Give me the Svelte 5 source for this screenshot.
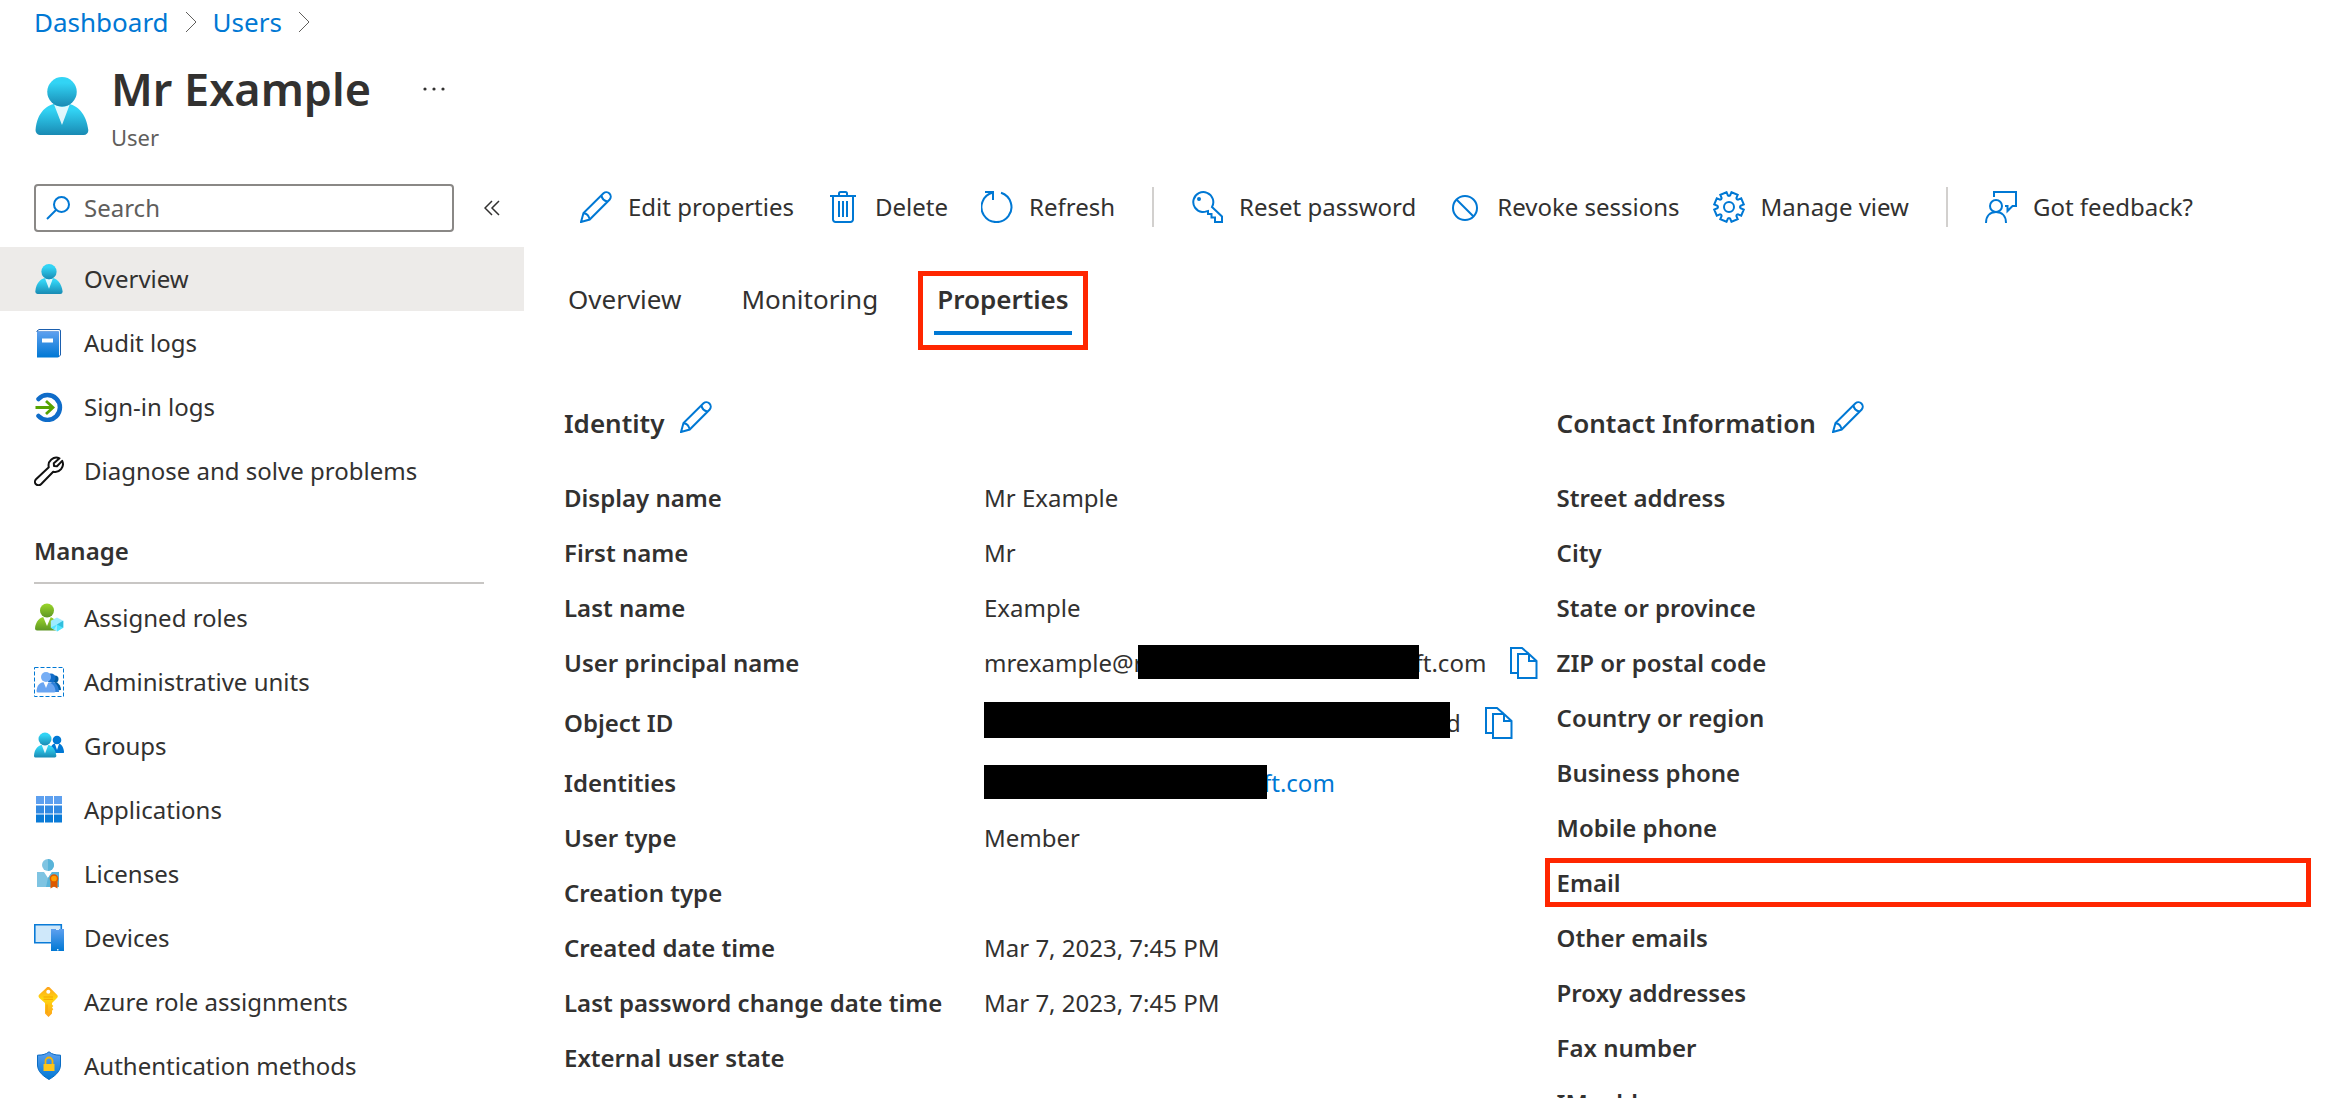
<script lang="ts">
    interface NavItem {
        label: string;
        icon: string;
    }

    interface Command {
        label: string;
        icon: string;
        divider?: boolean;
    }

    const generalItems: NavItem[] = [
        { label: "Overview", icon: "user" },
        { label: "Audit logs", icon: "book" },
        { label: "Sign-in logs", icon: "signin" },
        { label: "Diagnose and solve problems", icon: "wrench" },
    ];

    const manageItems: NavItem[] = [
        { label: "Assigned roles", icon: "roles" },
        { label: "Administrative units", icon: "units" },
        { label: "Groups", icon: "groups" },
        { label: "Applications", icon: "apps" },
        { label: "Licenses", icon: "license" },
        { label: "Devices", icon: "devices" },
        { label: "Azure role assignments", icon: "goldkey" },
        { label: "Authentication methods", icon: "shield" },
    ];

    const commands: Command[] = [
        { label: "Edit properties", icon: "pencil" },
        { label: "Delete", icon: "trash" },
        { label: "Refresh", icon: "refresh" },
        { label: "Reset password", icon: "key", divider: true },
        { label: "Revoke sessions", icon: "block" },
        { label: "Manage view", icon: "gear" },
        { label: "Got feedback?", icon: "feedback", divider: true },
    ];

    const tabs = ["Overview", "Monitoring", "Properties"];

    const identity = [
        { label: "Display name", value: "Mr Example" },
        { label: "First name", value: "Mr" },
        { label: "Last name", value: "Example" },
        { label: "User principal name", kind: "upn" },
        { label: "Object ID", kind: "object" },
        { label: "Identities", kind: "identities" },
        { label: "User type", value: "Member" },
        { label: "Creation type", value: "" },
        { label: "Created date time", value: "Mar 7, 2023, 7:45 PM" },
        { label: "Last password change date time", value: "Mar 7, 2023, 7:45 PM" },
        { label: "External user state", value: "" },
    ];

    const contact = [
        "Street address",
        "City",
        "State or province",
        "ZIP or postal code",
        "Country or region",
        "Business phone",
        "Mobile phone",
        "Email",
        "Other emails",
        "Proxy addresses",
        "Fax number",
        "IM addresses",
    ];

    let activeItem = $state("Overview");
    let activeTab = $state("Properties");
    let search = $state("");

    // eight teeth: two outer corners, then the curved valley between them
    const toothShape = [
        [-13, 15],
        [13, 15],
        [17, 11.6],
        [22.5, 11],
        [28, 11.6],
    ];

    const gearPath = (() => {
        const points: string[] = [];
        for (let i = 0; i < 8; i++) {
            for (const [offset, radius] of toothShape) {
                const a = ((i * 45 + 22.5 + offset) * Math.PI) / 180;
                points.push(
                    `${(16 + radius * Math.sin(a)).toFixed(2)} ${(16 - radius * Math.cos(a)).toFixed(2)}`,
                );
            }
        }
        return `M${points.join("L")}Z`;
    })();
</script>

{#snippet person()}
    <path
        d="M15.7 18a1.45 1.45 0 0 0 1.45-1.6C16.6 11.8 14 8.1 9 8.1S1.3 11.2.8 16.4A1.46 1.46 0 0 0 2.1 18z"
        fill="url(#cyan)"
    />
    <path d="M9 9.2a4.6 4.6 0 0 1-2.5-.75L9 14.9l2.4-6.4A4.5 4.5 0 0 1 9 9.2z" fill="#fff" opacity="0.85" />
    <circle cx="9" cy="4.6" r="4.58" fill="url(#cyan)" />
{/snippet}

{#snippet navIcon(name: string)}
    {#if name === "user"}
        <svg class="nav-icon" viewBox="0 0 18 18" aria-hidden="true">{@render person()}</svg>
    {:else}
        <svg class="nav-icon" viewBox="0 0 30 30" aria-hidden="true">
            {#if name === "book"}
                <path d="M5 1.5h20a1.5 1.5 0 0 1 1.5 1.5v24l-2 2V4H3V3z" fill="#f4f8fc" stroke="#1b5fae" stroke-width="1" />
                <path d="M3 3.5h22V28a1.5 1.5 0 0 1-1.5 1.5H3z" fill="url(#blue)" />
                <path d="M8 10.5h11v4H8z" fill="#fff" />
            {:else if name === "signin"}
                <path d="M4.5 7A12.4 12.4 0 1 1 4.5 24" fill="none" stroke="#0f6cc9" stroke-width="4.5" stroke-linecap="round" />
                <path d="M1.5 15.5h17M12 9l7 6.5-7 6.5" fill="none" stroke="#57a300" stroke-width="2.8" />
            {:else if name === "wrench"}
                <path
                    d="M25.5 2.300a7.800 7.800 0 0 0-10.700 9L2 23.300a3.500 3.500 0 0 0 5 5l12.200-12.600a7.800 7.800 0 0 0 9-10.800l-5.200 5.300-3-.3-.2-2.700z"
                    fill="none"
                    stroke="#111"
                    stroke-width="2"
                    stroke-linejoin="round"
                />
            {:else if name === "roles"}
                <path d="M1 25.5C1.5 19 5.5 13.5 12.5 13.5S23 18 24 25a2 2 0 0 1-2 2.5H3a2 2 0 0 1-2-2z" fill="url(#green)" />
                <path d="M9 13.5h8L13 23z" fill="#fff" />
                <circle cx="13" cy="7.5" r="7" fill="url(#green)" />
                <path d="M23 14.5l6.2 3.3v7L23 28.5l-6.2-3.7v-7z" fill="#9cebff" />
                <path d="M23 21.5l6.2-3.7v7L23 28.5zM23 21.5l-3 5-3.2-2z" fill="#50e6ff" />
                <path d="M23 21.5l6.2-3.7v7z" fill="#32bedd" />
            {:else if name === "units"}
                <path d="M.5 .5h29v29H.5z" fill="none" stroke="#0078d4" stroke-dasharray="4 2" />
                <circle cx="21" cy="12" r="3.5" fill="#005ba1" />
                <path d="M17 24c1-7 4-9 5-9s5 3 5 8z" fill="#005ba1" />
                <circle cx="17" cy="11" r="4.5" fill="#0f6cc9" />
                <path d="M14 25c0-8 3-10 5-10s6 4 6 10z" fill="#2b7fd9" />
                <circle cx="12" cy="10" r="5" fill="#76aef5" />
                <path d="M2.5 24c.5-6 3.5-9 9-9s9.5 3 10 9a1.5 1.5 0 0 1-1.5 1.5H4A1.5 1.5 0 0 1 2.5 24z" fill="#6aa5f2" />
                <path d="M9.5 15h5L12 21z" fill="#fff" />
            {:else if name === "groups"}
                <path d="M16 21c0-6 3-9 7-9s6.5 4 7 8.5a1.2 1.2 0 0 1-1.2 1.5H17z" fill="#0078d4" />
                <path d="M21 13h4l-2 6z" fill="#fff" />
                <circle cx="23" cy="9" r="4.3" fill="#0078d4" />
                <path d="M0 24.5c.5-6.5 4-11 11-11s10.500 4.500 11.300 11a1.700 1.700 0 0 1-1.800 2H2a1.800 1.800 0 0 1-2-2z" fill="url(#cyan)" />
                <path d="M7.5 13.5h7L11 22.5z" fill="#fff" opacity="0.9" />
                <circle cx="11" cy="8" r="6.5" fill="url(#cyan)" />
            {:else if name === "apps"}
                <path d="M2 1h8v8H2zM11 1h8v8h-8zM20 1h8v8h-8z" fill="#5ea0ef" />
                <path d="M2 10.500h8v8H2zM11 10.500h8v8h-8zM20 10.500h8v8h-8z" fill="#338ae2" />
                <path d="M2 19.500h8v8H2zM11 19.500h8v8h-8zM20 19.500h8v8h-8z" fill="#0a7bd7" />
            {:else if name === "license"}
                <path d="M3 13h7l4 6 4-6h7v15H3z" fill="#7fc4e2" />
                <path d="M14 19l4-6h7v15H12z" fill="#59b4d9" />
                <circle cx="14" cy="6" r="6" fill="#7fc4e2" />
                <path d="M14 0a6 6 0 0 1 0 12z" fill="#59b4d9" />
                <path d="M16.5 20h7v9.500l-3.500-2-3.500 2z" fill="#dd5900" />
                <circle cx="20" cy="19.5" r="3.6" fill="#ff9f00" stroke="#dd5900" stroke-width="1.5" />
            {:else if name === "devices"}
                <path d="M.8 1.800h26.500v18H.8z" fill="#cfe8fa" stroke="#0a7bd7" stroke-width="1.6" />
                <path d="M17 6h13v22H17z" fill="url(#blue)" />
                <path d="M22 6h3v1h-3zM23 26h1.500v1.500H23z" fill="#d9ecfb" />
            {:else if name === "goldkey"}
                <path
                    d="M12.500.7a2.500 2.500 0 0 1 3.500 0l7 7a2.500 2.500 0 0 1 0 3.400l-5 5v1.400l1.300 1.500-1.300 1.500 1.300 1.700-1.300 1.600v2.700L14.500 30 11 26.500V16L5.300 11a2.500 2.500 0 0 1 0-3.400z"
                    fill="url(#gold)"
                />
                <circle cx="14.3" cy="4.7" r="2" fill="#fff" />
                <path d="M9.5 10h9.500M9.500 12.300h9.500M13 17.500V26" fill="none" stroke="#f5a300" stroke-width="1" />
            {:else if name === "shield"}
                <path
                    d="M15 .8c3.500 2.700 6 3.200 11.500 3.400V14c0 7-6.500 11.500-11.500 14.500C10 25.500 3.500 21 3.500 14V4.200C9 4 11.500 3.500 15 .8z"
                    fill="url(#blue)"
                    stroke="#0a6cc4"
                    stroke-width="1"
                />
                <path d="M11.5 13.500V10a3.500 3.500 0 0 1 7 0v3.500" fill="none" stroke="#f7b500" stroke-width="1.8" />
                <path d="M9.5 13h11v7h-11z" fill="#ffc61a" />
            {/if}
        </svg>
    {/if}
{/snippet}

{#snippet lineIcon(name: string)}
    <svg class="line-icon" viewBox="0 0 32 32" aria-hidden="true">
        {#if name === "pencil"}
            <path d="M1 31l2.500-9L23.500 2.300a4.400 4.400 0 0 1 6.200 6.200L9.700 28.500zM3.500 22c3 .5 5.500 3 6.200 6.500M21.500 4.500c.5 3.500 2.500 5.500 6 6" />
        {:else if name === "trash"}
            <path d="M3 5h26M12 5V2.500A1.500 1.500 0 0 1 13.500 1h5A1.500 1.500 0 0 1 20 2.500V5M6 5v23.500A2.500 2.500 0 0 0 8.500 31h15a2.500 2.500 0 0 0 2.500-2.500V5M12 10v16M16 10v16M20 10v16" />
        {:else if name === "refresh"}
            <path d="M4 1h8v8M12 1.500A15 15 0 1 0 20 1.800" />
        {:else if name === "key"}
            <path d="M21 16a10 10 0 1 0-10 5c1.500.1 3 0 4.500-.6L17 20v3h3.500v3.500H24V31h7v-5.500z" />
            <circle class="dot" cx="8" cy="8" r="2" />
        {:else if name === "block"}
            <circle cx="16" cy="17" r="12" />
            <path d="M7.500 8.500l17 17" />
        {:else if name === "gear"}
            <path d={gearPath} />
            <circle cx="16" cy="16" r="5" />
        {:else if name === "feedback"}
            <path d="M9 6V1h22v14h-3.500l-5 5v-5H20" />
            <circle cx="11" cy="15" r="6" />
            <path d="M1 32c0-7 4-11 10-11s10 4 10 11" />
        {:else if name === "copy"}
            <path d="M9 26H2V1h11l7 6M20 7H9v24h18.500V14L20 7v7h7.500" />
        {/if}
    </svg>
{/snippet}

<svg class="defs" aria-hidden="true">
    <defs>
        <linearGradient id="cyan" x1="0" y1="0" x2="0" y2="1">
            <stop offset="0.2" stop-color="#32d4f5" />
            <stop offset="1" stop-color="#198ab3" />
        </linearGradient>
        <linearGradient id="green" x1="0" y1="0" x2="0" y2="1">
            <stop offset="0" stop-color="#9bd72a" />
            <stop offset="1" stop-color="#5e9624" />
        </linearGradient>
        <linearGradient id="blue" x1="0" y1="0" x2="0" y2="1">
            <stop offset="0" stop-color="#5ea0ef" />
            <stop offset="1" stop-color="#0078d4" />
        </linearGradient>
        <linearGradient id="gold" x1="0" y1="0" x2="0" y2="1">
            <stop offset="0" stop-color="#fea11b" />
            <stop offset="0.4" stop-color="#ffd70f" />
            <stop offset="1" stop-color="#fea11b" />
        </linearGradient>
    </defs>
</svg>

<div class="page">
    <nav class="breadcrumb" aria-label="Breadcrumb">
        {#each ["Dashboard", "Users"] as crumb}
            <a href="#{crumb.toLowerCase()}">{crumb}</a>
            <svg class="chevron" viewBox="0 0 12 22" aria-hidden="true"><path d="M1 1l10 10L1 21" /></svg>
        {/each}
    </nav>

    <header class="title">
        <svg class="avatar" viewBox="0 0 18 18" aria-hidden="true">{@render person()}</svg>
        <div>
            <div class="title-line">
                <h1>Mr Example</h1>
                <button class="more" aria-label="More actions">
                    <svg viewBox="0 0 24 4" aria-hidden="true">
                        <circle cx="2" cy="2" r="1.6" />
                        <circle cx="11" cy="2" r="1.6" />
                        <circle cx="20" cy="2" r="1.6" />
                    </svg>
                </button>
            </div>
            <p>User</p>
        </div>
    </header>

    <div class="body">
        <aside>
            <div class="search-row">
                <label class="search">
                    <svg viewBox="0 0 24 24" aria-hidden="true">
                        <circle cx="15.5" cy="8.5" r="7.5" />
                        <path d="M10 14L1 23" />
                    </svg>
                    <input type="text" placeholder="Search" aria-label="Search" bind:value={search} />
                </label>
                <button class="collapse" aria-label="Collapse menu">
                    <svg viewBox="0 0 16 16" aria-hidden="true"><path d="M8 1L1 8l7 7M15 1L8 8l7 7" /></svg>
                </button>
            </div>

            {#each generalItems as item}
                <button
                    class="nav-item"
                    class:active={activeItem === item.label}
                    onclick={() => (activeItem = item.label)}
                >
                    {@render navIcon(item.icon)}
                    {item.label}
                </button>
            {/each}

            <h2 class="nav-heading">Manage</h2>

            {#each manageItems as item}
                <button
                    class="nav-item"
                    class:active={activeItem === item.label}
                    onclick={() => (activeItem = item.label)}
                >
                    {@render navIcon(item.icon)}
                    {item.label}
                </button>
            {/each}
        </aside>

        <main>
            <div class="toolbar">
                {#each commands as command}
                    {#if command.divider}
                        <span class="divider"></span>
                    {/if}
                    <button class="command">
                        {@render lineIcon(command.icon)}
                        {command.label}
                    </button>
                {/each}
            </div>

            <div class="tabs" role="tablist">
                {#each tabs as tab}
                    <button
                        class="tab"
                        class:active={activeTab === tab}
                        role="tab"
                        aria-selected={activeTab === tab}
                        onclick={() => (activeTab = tab)}
                    >
                        {tab}
                    </button>
                {/each}
            </div>

            <div class="details">
                <section>
                    <div class="section-header">
                        <h2>Identity</h2>
                        <button aria-label="Edit identity">{@render lineIcon("pencil")}</button>
                    </div>
                    <dl>
                        {#each identity as row}
                            <div class="row" class:tall={row.kind === "object"}>
                                <dt>{row.label}</dt>
                                <dd>
                                    {#if row.kind === "upn"}
                                        <span>mrexample@r</span><span class="redacted upn"></span><span>ft.com</span>
                                        <button class="copy" aria-label="Copy user principal name">
                                            {@render lineIcon("copy")}
                                        </button>
                                    {:else if row.kind === "object"}
                                        <span class="redacted object"></span><span>d</span>
                                        <button class="copy" aria-label="Copy object ID">
                                            {@render lineIcon("copy")}
                                        </button>
                                    {:else if row.kind === "identities"}
                                        <span class="redacted identities"></span><a href="#identities">ft.com</a>
                                    {:else}
                                        {row.value}
                                    {/if}
                                </dd>
                            </div>
                        {/each}
                    </dl>
                </section>

                <section>
                    <div class="section-header">
                        <h2>Contact Information</h2>
                        <button aria-label="Edit contact information">{@render lineIcon("pencil")}</button>
                    </div>
                    <dl>
                        {#each contact as label}
                            <div class="row" class:marked={label === "Email"}>
                                <dt>{label}</dt>
                                <dd></dd>
                            </div>
                        {/each}
                    </dl>
                </section>
            </div>
        </main>
    </div>
</div>

<style>
    :global(body) {
        margin: 0;
        background: #fff;
    }

    .defs {
        position: absolute;
        width: 0;
        height: 0;
    }

    .page {
        height: 100vh;
        overflow: hidden;
        color: #323130;
        font-family: "Noto Sans", "Open Sans", sans-serif;
        font-size: 24px;
        line-height: 32px;
    }

    button {
        padding: 0;
        border: 0;
        background: none;
        color: inherit;
        font: inherit;
        cursor: pointer;
    }

    h1,
    h2,
    p,
    dl,
    dd {
        margin: 0;
    }

    a {
        color: #0078d4;
        text-decoration: none;
    }

    svg {
        display: block;
        flex: none;
    }

    .breadcrumb {
        display: flex;
        align-items: center;
        gap: 16px;
        height: 44px;
        padding-left: 34px;
        font-size: 26px;
    }

    .chevron {
        width: 12px;
        height: 22px;
        fill: none;
        stroke: #605e5c;
    }

    .title {
        display: flex;
        gap: 20px;
        padding: 15px 0 0 33px;
    }

    .avatar {
        width: 58px;
        height: 58px;
        margin-top: 18px;
    }

    .title-line {
        display: flex;
        align-items: center;
        gap: 52px;
    }

    h1 {
        font-size: 45px;
        font-weight: 600;
        line-height: 60px;
    }

    .more svg {
        width: 24px;
        height: 4px;
        fill: #323130;
    }

    .title p {
        color: #605e5c;
        font-size: 22px;
        line-height: 36px;
    }

    .body {
        display: flex;
        padding-top: 29px;
    }

    aside {
        flex: 0 0 524px;
    }

    .search-row {
        display: flex;
        align-items: center;
        padding: 0 24px 15px 34px;
    }

    .search {
        display: flex;
        flex: 1;
        align-items: center;
        gap: 14px;
        height: 44px;
        padding: 0 10px;
        border: 2px solid #8a8886;
        border-radius: 4px;
    }

    .search svg {
        width: 24px;
        height: 24px;
        fill: none;
        stroke: #0078d4;
        stroke-width: 2;
    }

    .search input {
        flex: 1;
        min-width: 0;
        padding: 0;
        border: 0;
        outline: 0;
        background: none;
        color: #323130;
        font: inherit;
    }

    .search input::placeholder {
        color: #605e5c;
        opacity: 1;
    }

    .collapse {
        margin-left: 30px;
    }

    .collapse svg {
        width: 16px;
        height: 16px;
        fill: none;
        stroke: #323130;
        stroke-width: 1.5;
    }

    .nav-item {
        display: flex;
        align-items: center;
        gap: 20px;
        width: 100%;
        height: 64px;
        padding-left: 34px;
        text-align: left;
    }

    .nav-item.active {
        background: #edebe9;
    }

    .nav-icon {
        width: 30px;
        height: 30px;
    }

    .nav-heading {
        margin: 0 40px 2px 34px;
        padding: 32px 0 15px;
        border-bottom: 2px solid #c8c6c4;
        font-size: 24px;
        font-weight: 600;
    }

    main {
        flex: 1;
        min-width: 0;
        padding: 0 39px 0 40px;
    }

    .toolbar {
        display: flex;
        align-items: center;
        gap: 33px;
        height: 46px;
        padding-left: 16px;
        white-space: nowrap;
    }

    .divider {
        width: 2px;
        height: 40px;
        margin: 0 4px;
        background: #d2d0ce;
    }

    .command {
        display: flex;
        align-items: center;
        gap: 16px;
    }

    .line-icon {
        width: 32px;
        height: 32px;
        fill: none;
        stroke: #0078d4;
        stroke-width: 2;
    }

    .line-icon .dot {
        fill: #0078d4;
        stroke: none;
    }

    .tabs {
        display: flex;
        align-items: flex-start;
        gap: 32px;
        margin-top: 41px;
    }

    .tab {
        margin-left: 4px;
        padding: 12px 0 28px;
        font-size: 26px;
        line-height: 32px;
    }

    .tab + .tab {
        margin-left: 28px;
    }

    .tab.active {
        margin-left: 8px;
        padding: 7px 14px 10px;
        border: 5px solid #ff2600;
        font-weight: 600;
    }

    .tab.active::after {
        display: block;
        height: 4px;
        margin: 16px -3px 0;
        background: #0078d4;
        content: "";
    }

    .details {
        display: grid;
        grid-template-columns: 25fr 19fr;
        margin-top: 51px;
    }

    .section-header {
        display: flex;
        gap: 16px;
        margin-bottom: 21px;
    }

    .section-header h2 {
        padding: 2px 0 6px;
        font-size: 26px;
        font-weight: 600;
        line-height: 40px;
    }

    .section-header button {
        align-self: flex-start;
    }

    .row {
        position: relative;
        display: flex;
        align-items: center;
        height: 55px;
    }

    .row.tall {
        height: 65px;
    }

    dt {
        flex: 0 0 420px;
        font-weight: 600;
        white-space: nowrap;
    }

    dd {
        display: flex;
        align-items: center;
        white-space: nowrap;
    }

    .redacted {
        z-index: 1;
        height: 34px;
        margin: 0 -4px 2px 0;
        background: #000;
    }

    .redacted.upn {
        width: 281px;
        margin-left: -6px;
    }

    .redacted.object {
        width: 466px;
        height: 36px;
        margin-bottom: 5px;
    }

    .redacted.identities {
        width: 283px;
    }

    .copy {
        margin-left: 23px;
    }

    /* frame round a field that needs attention */
    .row.marked::after {
        position: absolute;
        inset: 3px 0 3px -12px;
        border: 5px solid #ff2600;
        content: "";
    }
</style>
